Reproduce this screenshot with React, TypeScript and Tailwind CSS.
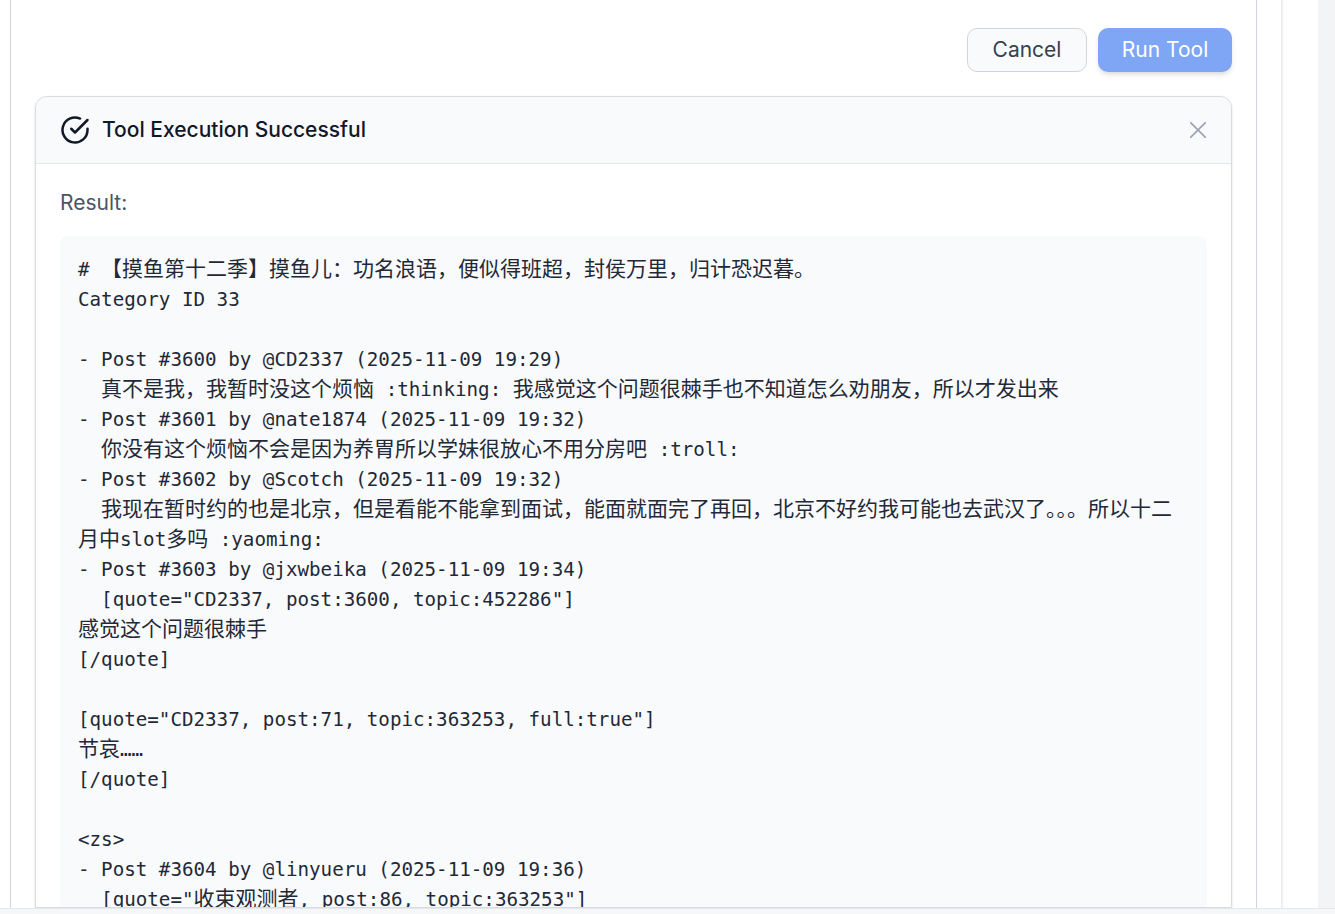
import React from "react";

const lines = `# 【摸鱼第十二季】摸鱼儿：功名浪语，便似得班超，封侯万里，归计恐迟暮。
Category ID 33

- Post #3600 by @CD2337 (2025-11-09 19:29)
  真不是我，我暂时没这个烦恼 :thinking: 我感觉这个问题很棘手也不知道怎么劝朋友，所以才发出来
- Post #3601 by @nate1874 (2025-11-09 19:32)
  你没有这个烦恼不会是因为养胃所以学妹很放心不用分房吧 :troll:
- Post #3602 by @Scotch (2025-11-09 19:32)
  我现在暂时约的也是北京，但是看能不能拿到面试，能面就面完了再回，北京不好约我可能也去武汉了。。。所以十二月中slot多吗 :yaoming:
- Post #3603 by @jxwbeika (2025-11-09 19:34)
  [quote="CD2337, post:3600, topic:452286"]
感觉这个问题很棘手
[/quote]

[quote="CD2337, post:71, topic:363253, full:true"]
节哀……
[/quote]

<zs>
- Post #3604 by @linyueru (2025-11-09 19:36)
  [quote="收束观测者, post:86, topic:363253"]`;

function Mixed({ text }: { text: string }) {
  const parts = text.split(/([\u3000-\u9fff\uff00-\uffef]+)/);
  return (
    <>
      {parts.map((p, i) =>
        i % 2 === 1 ? (
          <span key={i} className="text-[21px] leading-none font-['Noto_Sans_CJK_SC',sans-serif]">
            {p}
          </span>
        ) : (
          p
        )
      )}
    </>
  );
}

export default function App() {
  return (
    <div className="flex h-screen flex-col overflow-hidden bg-white font-['Inter',sans-serif]">
      <div className="flex min-h-0 flex-1">
        <div className="w-[10px] shrink-0" />
        <main className="flex w-[1247px] shrink-0 flex-col border-x border-[#d1d5db] px-6 pt-[28px]">
          <div className="flex justify-end gap-[11px]">
            <button className="h-[44px] w-[120px] rounded-[10px] border border-[#d1d5db] bg-[#f9fafb] text-[21px] text-[#374151]">
              Cancel
            </button>
            <button className="h-[44px] w-[134px] rounded-[10px] bg-[#7ea6f4] text-[21px] text-white shadow-md">
              Run Tool
            </button>
          </div>
          <section className="mt-[24px] flex min-h-0 flex-1 flex-col rounded-t-[12px] border border-[#d8dbe0] shadow-sm">
            <header className="flex h-[67px] shrink-0 items-center justify-between rounded-t-[12px] border-b border-[#e5e7eb] bg-[#f9fafb] pl-6 pr-[25px]">
              <div className="flex items-center gap-3">
                <svg width="30" height="30" viewBox="0 0 24 24" fill="none" stroke="#111827" strokeWidth="2" strokeLinecap="round" strokeLinejoin="round">
                  <path d="M22 11.08V12a10 10 0 1 1-5.93-9.14" />
                  <path d="M9 11l3 3L22 4" />
                </svg>
                <span className="text-[21px] font-medium text-[#111827]">Tool Execution Successful</span>
              </div>
              <svg width="16" height="16" viewBox="0 0 16 16" fill="none" stroke="#9ca3af" strokeWidth="1.6" strokeLinecap="round">
                <path d="M.6.6l14.8 14.8M15.4.6L.6 15.4" />
              </svg>
            </header>
            <div className="flex min-h-0 flex-1 flex-col px-6 pt-[26px]">
              <div className="text-[21px] leading-[26px] text-[#4b5563]">Result:</div>
              <pre className="mt-[20px] min-h-0 flex-1 overflow-hidden rounded-t-[8px] bg-[#f9fafb] px-[18px] pt-[19px] font-['DejaVu_Sans_Mono',monospace] text-[19.2px] leading-[30px] whitespace-pre-wrap text-[#1f2937]">
                {lines.split("\n").map((l, i) => (
                  <div key={i} className="min-h-[30px]">
                    <Mixed text={l} />
                  </div>
                ))}
              </pre>
            </div>
          </section>
        </main>
        <div className="w-[24px] shrink-0" />
        <div className="w-[3px] shrink-0 bg-gradient-to-r from-[#e5e7eb] to-white" />
        <div className="flex-1" />
        <div className="w-[17px] shrink-0 bg-[#f3f4f6]" />
      </div>
      <div className="h-[6px] shrink-0 border-t border-[#e5e7eb] bg-[#f6f7f8]" />
    </div>
  );
}
